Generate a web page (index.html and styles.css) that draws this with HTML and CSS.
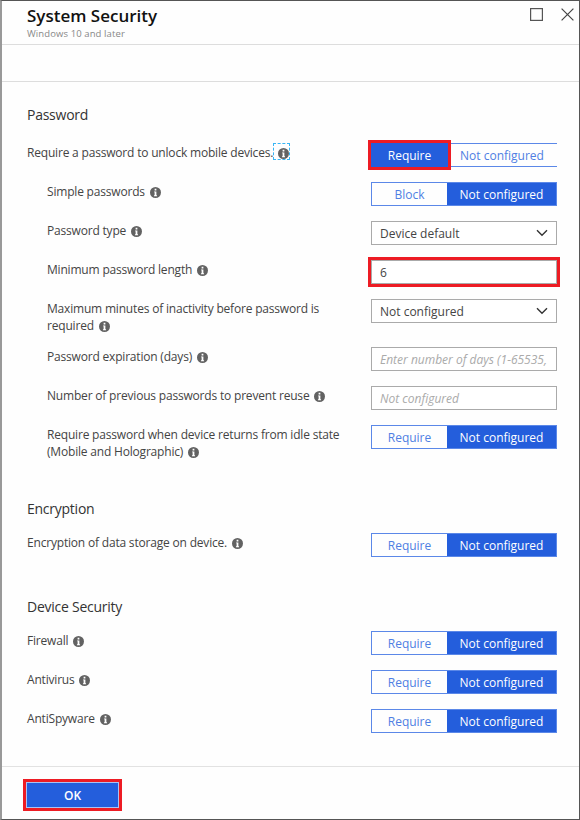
FILE: index.html
```html
<!DOCTYPE html>
<html lang="en">
<head>
<meta charset="utf-8">
<title>System Security</title>
<link rel="stylesheet" href="styles.css">
</head>
<body>
<svg class="defs" width="0" height="0" aria-hidden="true">
  <symbol id="info" viewBox="0 0 10 10"><circle cx="5" cy="5" r="5" fill="#626262"/><path d="M4.2 1.6h1.6v1.5H4.2zM3.7 4h2.1v3.5h.6v.8H3.6v-.8h.6V4.8h-.5z" fill="#fff"/></symbol>
  <symbol id="chevron" viewBox="0 0 12 8"><path d="M1 1.3l5 5 5-5" fill="none" stroke="#333" stroke-width="1.4"/></symbol>
</svg>
<main class="blade">
  <header class="header">
    <div>
      <h1 class="title">System Security</h1>
      <p class="subtitle">Windows 10 and later</p>
    </div>
    <div class="window-actions">
      <svg width="13" height="13" viewBox="0 0 13 13"><rect x=".6" y=".6" width="11.8" height="11.8" fill="none" stroke="#555" stroke-width="1.2"/></svg>
      <svg width="13" height="13" viewBox="0 0 13 13"><path d="M.6.6l11.8 11.8M12.4.6L.6 12.4" fill="none" stroke="#444" stroke-width="1.2"/></svg>
    </div>
  </header>
  <div class="toolbar"></div>
  <div class="content">
    <section class="section password">
      <h2 class="heading">Password</h2>
      <div class="row">
        <div class="label first"><span>Require a password to unlock mobile devices.</span><span class="focus"><svg class="info"><use href="#info"/></svg></span></div>
        <div class="toggle left-on"><span class="option on marked">Require</span><span class="option">Not configured</span></div>
      </div>
      <div class="row nested">
        <div class="label">Simple passwords <svg class="info"><use href="#info"/></svg></div>
        <div class="toggle"><span class="option">Block</span><span class="option on">Not configured</span></div>
      </div>
      <div class="row nested">
        <div class="label">Password type <svg class="info"><use href="#info"/></svg></div>
        <div class="field">Device default<svg class="chevron"><use href="#chevron"/></svg></div>
      </div>
      <div class="row nested">
        <div class="label">Minimum password length <svg class="info"><use href="#info"/></svg></div>
        <div class="field marked">6</div>
      </div>
      <div class="row nested tall">
        <div class="label">Maximum minutes of inactivity before password is<br>required <svg class="info"><use href="#info"/></svg></div>
        <div class="field">Not configured<svg class="chevron"><use href="#chevron"/></svg></div>
      </div>
      <div class="row nested">
        <div class="label">Password expiration (days) <svg class="info"><use href="#info"/></svg></div>
        <div class="field placeholder">Enter number of days (1-65535,</div>
      </div>
      <div class="row nested">
        <div class="label">Number of previous passwords to prevent reuse <svg class="info"><use href="#info"/></svg></div>
        <div class="field placeholder">Not configured</div>
      </div>
      <div class="row nested tall">
        <div class="label">Require password when device returns from idle state<br>(Mobile and Holographic) <svg class="info"><use href="#info"/></svg></div>
        <div class="toggle"><span class="option">Require</span><span class="option on">Not configured</span></div>
      </div>
    </section>
    <section class="section encryption">
      <h2 class="heading">Encryption</h2>
      <div class="row">
        <div class="label">Encryption of data storage on device. <svg class="info"><use href="#info"/></svg></div>
        <div class="toggle"><span class="option">Require</span><span class="option on">Not configured</span></div>
      </div>
    </section>
    <section class="section device">
      <h2 class="heading">Device Security</h2>
      <div class="row">
        <div class="label">Firewall <svg class="info"><use href="#info"/></svg></div>
        <div class="toggle"><span class="option">Require</span><span class="option on">Not configured</span></div>
      </div>
      <div class="row">
        <div class="label">Antivirus <svg class="info"><use href="#info"/></svg></div>
        <div class="toggle"><span class="option">Require</span><span class="option on">Not configured</span></div>
      </div>
      <div class="row">
        <div class="label">AntiSpyware <svg class="info"><use href="#info"/></svg></div>
        <div class="toggle"><span class="option">Require</span><span class="option on">Not configured</span></div>
      </div>
    </section>
  </div>
  <footer class="footer"><button class="ok marked">OK</button></footer>
</main>
</body>
</html>
```

FILE: styles.css
```css
* { box-sizing: border-box; }
body { margin: 0; background: #fff; font-family: "Open Sans", "Noto Sans", sans-serif; color: #444; font-size: 12px; }
.defs { display: block; width: 0; height: 0; position: absolute; }
.blade {
  width: 580px; height: 820px; display: flex; flex-direction: column; background: #fefefe;
  border: 1px solid #555; border-left: 2px solid #999; overflow: hidden;
}
.header { height: 44px; padding: 5px 5px 0 25px; display: flex; justify-content: space-between; border-bottom: 1px solid #ddd; }
.title { margin: 0; font-size: 17px; line-height: 20px; font-weight: 600; color: #111; }
.subtitle { margin: 0; font-size: 9.5px; line-height: 15px; color: #888; letter-spacing: .1px; }
.window-actions { display: flex; gap: 18px; padding-top: 2px; }
.toolbar { height: 37px; border-bottom: 1px solid #ddd; }
.content { flex: 1; padding: 23px 22px 0 25px; }
.heading { margin: 0; font-size: 14px; line-height: 20px; font-weight: 400; color: #333; height: 38px; letter-spacing: -.25px; }
.section.password { height: 394px; }
.section.encryption { height: 98px; }
.encryption .heading, .device .heading { height: 34px; }
.row { display: flex; justify-content: space-between; height: 39px; }
.row.nested { padding-left: 20px; }
.row.tall { height: 48px; }
.label { line-height: 16.5px; padding-top: 2px; white-space: nowrap; letter-spacing: -.19px; }
.label.first { display: flex; align-items: flex-start; padding-top: 0; }
.label.first > span:first-child { padding-top: 2px; }
.info { width: 11px; height: 11px; margin-left: 2px; vertical-align: -2px; }
.focus { display: flex; width: 17px; height: 17px; border: 1px dashed #38b6f5; padding: 4px 0 0 4px; }
.focus .info { margin: 0; flex: none; }
.toggle { width: 186px; height: 24px; display: flex; border: 1px solid #5b88e8; flex: none; font-size: 12px; line-height: 23px; color: #4f7fe3; }
.option { width: 75px; text-align: center; }
.option:last-child { flex: 1; }
.option.on { background: #245edc; color: #fff; }
.toggle.left-on { border-right: 0; border-left: 0; }
.left-on .option.on { width: 77px; margin: -1px 0; line-height: 25px; }
.left-on .option:last-child { padding-right: 1px; }
.field { width: 186px; height: 24px; border: 1px solid #aaa; flex: none; display: flex; justify-content: space-between; align-items: center; padding: 0 8px; white-space: nowrap; background: #fff; }
.chevron { width: 12px; height: 8px; }
.placeholder { font-style: italic; color: #aaa; }
.marked { outline: 3px solid #ed1c24; }
.footer { height: 53px; border-top: 1px solid #e2e2e2; padding: 15px 0 0 24px; }
.ok { display: block; width: 93px; height: 26px; border: 1px solid #a9c2f3; padding: 1px 0 0; background: #245edc; color: #fff; font: 600 12px/24px "Open Sans", sans-serif; }
```
